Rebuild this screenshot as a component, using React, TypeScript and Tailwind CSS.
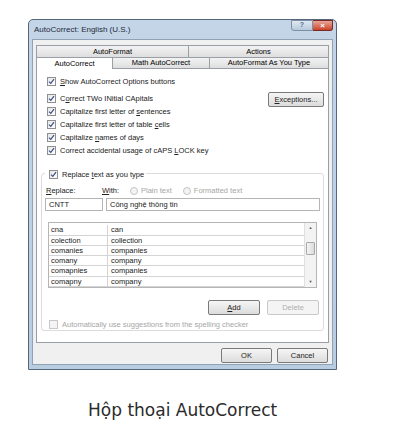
import React from "react";

const font = { fontFamily: '"Liberation Sans", Arial, sans-serif' };

const Check = ({ checked = true, disabled = false }: { checked?: boolean; disabled?: boolean }) => (
  <span
    className={`flex h-[9px] w-[9px] shrink-0 items-center justify-center border ${
      disabled ? "border-[#c8c8c8] bg-[#f4f4f4]" : "border-[#8f8f8f] bg-gradient-to-br from-[#e6e6e6] to-white"
    }`}
  >
    {checked && (
      <svg width="7" height="7" viewBox="0 0 7 7">
        <path d="M1 3.6 L2.8 5.4 L6 1.2" fill="none" stroke="#3b4f85" strokeWidth="1.2" />
      </svg>
    )}
  </span>
);

const Radio = () => (
  <span className="h-[8px] w-[8px] shrink-0 rounded-full border border-[#c4c4c4] bg-[#f4f4f4]" />
);

const CheckRow = ({ children, checked = true, disabled = false }: { children: React.ReactNode; checked?: boolean; disabled?: boolean }) => (
  <div className="flex h-[13px] items-center gap-[4px]">
    <Check checked={checked} disabled={disabled} />
    <span className={disabled ? "text-[#a6a6a6]" : "text-[#222]"}>{children}</span>
  </div>
);

const Btn = ({ children, className = "", disabled = false }: { children: React.ReactNode; className?: string; disabled?: boolean }) => (
  <div
    className={`flex h-[15px] items-center justify-center rounded-[2px] border ${
      disabled ? "border-[#c9c9c9] bg-[#f4f4f4] text-[#b0b0b0]" : "border-[#7a7a7a] bg-gradient-to-b from-[#f6f6f6] to-[#dcdcdc] text-[#222]"
    } ${className}`}
  >
    {children}
  </div>
);

const rows = [
  ["cna", "can"],
  ["colection", "collection"],
  ["comanies", "companies"],
  ["comany", "company"],
  ["comapnies", "companies"],
  ["comapny", "company"],
];

export default function App() {
  return (
    <div className="h-[443px] w-[404px] bg-white pl-[28px] pt-[19px]" style={font}>
      {/* window frame */}
      <div className="flex h-[351px] w-[309px] flex-col rounded-t-[5px] border border-[#55677d] bg-gradient-to-b from-[#c3d5e7] to-[#b9cde0] px-[3px] pb-[4px] text-[7.5px]">
        <div className="flex h-[19px] items-center justify-between">
          <span className="pl-[2px] text-[8px] text-[#1e2a3a]">AutoCorrect: English (U.S.)</span>
          <div className="flex items-center self-start">
            <div className="flex h-[11px] w-[22px] items-center justify-center rounded-bl-[3px] border border-[#7d8fa4] bg-gradient-to-b from-[#dfe9f3] to-[#b8c9dc] text-[7px] font-bold text-[#5a6c82]">
              ?
            </div>
            <div className="flex h-[11px] w-[20px] items-center justify-center rounded-br-[3px] border border-l-0 border-[#7a2a20] bg-gradient-to-b from-[#e8a597] to-[#c8412a] text-[8px] font-bold text-white">
              ×
            </div>
          </div>
        </div>

        {/* body */}
        <div className="flex flex-1 flex-col border border-[#8fa2b8] bg-[#f0f0f0] px-[3px] pt-[5px]">
          {/* tabs */}
          <div className="flex h-[12px]">
            <div className="flex w-[153px] items-center justify-center border border-b-0 border-[#9a9ea6] bg-gradient-to-b from-[#f3f3f3] to-[#dedede]">AutoFormat</div>
            <div className="flex flex-1 items-center justify-center border border-b-0 border-l-0 border-[#9a9ea6] bg-gradient-to-b from-[#f3f3f3] to-[#dedede]">Actions</div>
          </div>
          <div className="flex h-[12px]">
            <div className="flex w-[77px] items-center justify-center border border-b-0 border-[#9a9ea6] bg-white">AutoCorrect</div>
            <div className="flex w-[97px] items-center justify-center border border-l-0 border-[#9a9ea6] bg-gradient-to-b from-[#f3f3f3] to-[#dedede]">Math AutoCorrect</div>
            <div className="flex flex-1 items-center justify-center border border-l-0 border-[#9a9ea6] bg-gradient-to-b from-[#f3f3f3] to-[#dedede]">AutoFormat As You Type</div>
          </div>

          {/* tab page */}
          <div className="flex h-[274px] flex-col border border-t-0 border-[#9a9ea6] bg-white px-[4px] pt-[6px]">
            <div className="pl-[6px]">
              <CheckRow>
                <u>S</u>how AutoCorrect Options buttons
              </CheckRow>
            </div>
            <div className="mt-[4px] flex items-start justify-between pl-[6px]">
              <div className="flex flex-col">
                <CheckRow>
                  C<u>o</u>rrect TWo INitial CApitals
                </CheckRow>
                <CheckRow>
                  Capitalize first letter of <u>s</u>entences
                </CheckRow>
                <CheckRow>
                  Capitalize first letter of table <u>c</u>ells
                </CheckRow>
                <CheckRow>
                  Capitalize <u>n</u>ames of days
                </CheckRow>
                <CheckRow>
                  Correct accidental usage of cAPS <u>L</u>OCK key
                </CheckRow>
              </div>
              <Btn className="w-[56px]">
                <u>E</u>xceptions...
              </Btn>
            </div>

            {/* replace group */}
            <div className="mt-[16px] flex h-[158px] flex-col rounded-[3px] border border-[#dcdcdc] px-[3px] pt-[1px]">
              <div className="-mt-[7px] w-fit bg-white pl-[4px] pr-[2px]">
                <CheckRow>
                  Replace <u>t</u>ext as you type
                </CheckRow>
              </div>
              <div className="mt-[5px] flex h-[10px] items-center text-[#222]">
                <span className="w-[57px] pl-[1px]">
                  <u>R</u>eplace:
                </span>
                <span className="w-[28px]">
                  <u>W</u>ith:
                </span>
                <div className="flex items-center gap-[3px] text-[#a6a6a6]">
                  <Radio />
                  <span>Plain text</span>
                </div>
                <div className="ml-[11px] flex items-center gap-[3px] text-[#a6a6a6]">
                  <Radio />
                  <span>Formatted text</span>
                </div>
              </div>
              <div className="mt-[2px] flex h-[14px] gap-[3px]">
                <div className="flex w-[58px] items-center border border-[#b5b5b5] pl-[3px] text-[#222]">CNTT</div>
                <div className="flex flex-1 items-center border border-[#b5b5b5] pl-[3px] text-[#222]">Công nghệ thông tin</div>
              </div>

              {/* list */}
              <div className="ml-[3px] mr-[3px] mt-[11px] flex h-[66px] border border-[#b5b5b5]">
                <div className="flex flex-1 flex-col pt-[2px]">
                  {rows.map(([a, b]) => (
                    <div key={a} className="flex h-[10.3px] border-b border-[#d4d4d4] text-[#222]">
                      <span className="flex w-[59px] items-center border-r border-[#d4d4d4] pl-[2px]">{a}</span>
                      <span className="flex items-center pl-[3px]">{b}</span>
                    </div>
                  ))}
                </div>
                <div className="flex w-[12px] flex-col items-center justify-between border-l border-[#e0e0e0] bg-[#f3f3f3] py-[2px]">
                  <span className="text-[4px] text-[#555]">▲</span>
                  <div className="-mt-[14px] h-[13px] w-[9px] rounded-[1px] border border-[#a8a8a8] bg-gradient-to-r from-[#f4f4f4] to-[#dcdcdc]" />
                  <span className="text-[4px] text-[#555]">▼</span>
                </div>
              </div>

              <div className="mt-[12px] flex justify-end gap-[7px] pr-[1px]">
                <Btn className="w-[52px] border-[#3c7fb1] from-[#eaf6fd] to-[#c4e5f6]">
                  <u>A</u>dd
                </Btn>
                <Btn disabled className="w-[52px]">
                  Delete
                </Btn>
              </div>
              <div className="mt-[3px] pl-[4px]">
                <CheckRow checked={false} disabled>
                  Automatically use suggestions from the spelling checker
                </CheckRow>
              </div>
            </div>
          </div>

          {/* footer */}
          <div className="mt-[5px] flex justify-end gap-[5px] pr-[1px]">
            <Btn className="w-[51px]">OK</Btn>
            <Btn className="w-[51px]">Cancel</Btn>
          </div>
        </div>
      </div>

      <div
        className="mt-[28px] pl-[60px] text-[17px] text-[#2b2b2b]"
        style={{ fontFamily: '"DejaVu Sans", Verdana, sans-serif' }}
      >
        Hộp thoại AutoCorrect
      </div>
    </div>
  );
}
